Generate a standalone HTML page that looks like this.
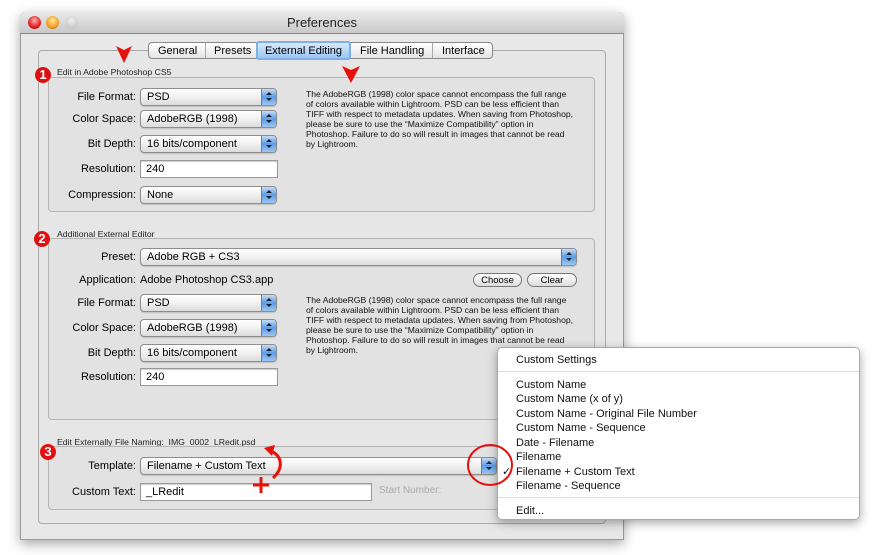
<!DOCTYPE html>
<html><head><meta charset="utf-8"><style>
*{margin:0;padding:0;box-sizing:border-box}
body{width:879px;height:555px;background:#fff;position:relative;overflow:hidden;font-family:"Liberation Sans",sans-serif;font-size:11px;color:#000}
.a{position:absolute}
.win{left:20px;top:12px;width:604px;height:528px;background:#e8e8e8;border:1px solid #999;border-radius:5px 5px 0 0;box-shadow:0 4px 12px rgba(0,0,0,.35)}
.title{left:20px;top:12px;width:604px;height:22px;background:linear-gradient(#e9e9e9,#c9c9c9);border-radius:5px 5px 0 0;border-bottom:1px solid #888;text-align:center;line-height:22px;font-size:13px;color:#222}
.dot{width:13px;height:13px;border-radius:50%;top:16px}
.box{border:1px solid #b5b5b5;border-radius:4px;background:#e2e2e2}
.lbl{width:88px;text-align:right;left:48px;line-height:14px;font-size:11px}
.pop{height:18px;border:1px solid #8d8d8d;border-radius:4px;background:linear-gradient(#fff,#f2f2f2 45%,#dcdcdc);line-height:16px;padding-left:6px;font-size:11px;box-shadow:0 1px 1px rgba(0,0,0,.15);overflow:hidden}
.pop i{position:absolute;right:0;top:0;bottom:0;width:15px;border-radius:0 3px 3px 0;background:linear-gradient(#c4dcf8,#5e9be4 50%,#9cc6f3);border-left:1px solid #5a7fb0}
.pop i::before{content:"";position:absolute;left:4px;top:3px;border:3px solid transparent;border-bottom:3px solid #123;border-top:0}
.pop i::after{content:"";position:absolute;left:4px;top:9px;border:3px solid transparent;border-top:3px solid #123;border-bottom:0}
.fld{height:18px;border:1px solid #999;background:#fff;line-height:16px;padding-left:5px;box-shadow:inset 0 1px 1px rgba(0,0,0,.2)}
.desc{font-size:8.6px;line-height:10px;color:#111;white-space:nowrap}
.cap{font-size:8.7px;color:#222}
.num{width:16px;height:16px;border-radius:50%;background:#e01010;color:#fff;font-weight:bold;font-size:13px;text-align:center;line-height:16px}
.btn{height:14px;border:1px solid #777;border-radius:8px;background:linear-gradient(#fff,#ddd);text-align:center;line-height:13px;font-size:9.5px}
.menu{left:497px;top:347px;width:363px;height:173px;background:rgba(255,255,255,.98);border:1px solid #aaa;border-radius:5px;box-shadow:0 3px 10px rgba(0,0,0,.35)}
.mi{left:18px;font-size:11px;line-height:14px;color:#111}
</style></head><body>
<div class="a win"></div>
<div class="a title">Preferences</div>
<div class="a dot" style="left:28px;background:radial-gradient(circle at 50% 35%,#ffb0b0,#e02020 60%,#a00)"></div>
<div class="a dot" style="left:46px;background:radial-gradient(circle at 50% 35%,#ffe6a0,#f0a020 60%,#b06000)"></div>
<div class="a dot" style="left:65px;background:radial-gradient(circle at 50% 35%,#eee,#bbb)"></div>

<div class="a" style="left:38px;top:50px;width:568px;height:474px;border:1px solid #aaa;border-radius:4px;background:#e6e6e6"></div>
<div class="a" style="left:148px;top:42px;width:345px;height:17px;border:1px solid #888;border-radius:4px;background:linear-gradient(#fff,#e4e4e4);font-size:11px;line-height:16px">
<span class="a" style="left:9px">General</span><span class="a" style="left:56px;top:0;width:1px;height:15px;background:#aaa"></span>
<span class="a" style="left:65px">Presets</span>
<span class="a" style="left:107px;top:-2px;width:95px;height:19px;border:2px solid #7fb0ea;border-radius:3px;background:linear-gradient(#d8e9fc,#9cc6f2);text-align:center;line-height:16px">External Editing</span>
<span class="a" style="left:211px">File Handling</span><span class="a" style="left:283px;top:0;width:1px;height:15px;background:#aaa"></span>
<span class="a" style="left:293px">Interface</span></div>

<!-- group 1 -->
<div class="a cap" style="left:57px;top:67px">Edit in Adobe Photoshop CS5</div>
<div class="a box" style="left:48px;top:77px;width:547px;height:135px"></div>
<div class="a num" style="left:35px;top:67px">1</div>
<div class="a lbl" style="top:90px">File Format:</div><div class="a pop" style="left:140px;top:88px;width:137px">PSD<i></i></div>
<div class="a lbl" style="top:112px">Color Space:</div><div class="a pop" style="left:140px;top:110px;width:137px">AdobeRGB (1998)<i></i></div>
<div class="a lbl" style="top:137px">Bit Depth:</div><div class="a pop" style="left:140px;top:135px;width:137px">16 bits/component<i></i></div>
<div class="a lbl" style="top:162px">Resolution:</div><div class="a fld" style="left:140px;top:160px;width:138px">240</div>
<div class="a lbl" style="top:188px">Compression:</div><div class="a pop" style="left:140px;top:186px;width:137px">None<i></i></div>
<div class="a desc" style="left:306px;top:89px">The AdobeRGB (1998) color space cannot encompass the full range<br>of colors available within Lightroom. PSD can be less efficient than<br>TIFF with respect to metadata updates. When saving from Photoshop,<br>please be sure to use the “Maximize Compatibility” option in<br>Photoshop. Failure to do so will result in images that cannot be read<br>by Lightroom.</div>

<!-- group 2 -->
<div class="a cap" style="left:57px;top:229px">Additional External Editor</div>
<div class="a box" style="left:48px;top:238px;width:547px;height:182px"></div>
<div class="a num" style="left:34px;top:231px">2</div>
<div class="a lbl" style="top:250px">Preset:</div><div class="a pop" style="left:140px;top:248px;width:437px">Adobe RGB + CS3<i></i></div>
<div class="a lbl" style="top:273px">Application:</div><div class="a" style="left:140px;top:273px;line-height:14px">Adobe Photoshop CS3.app</div>
<div class="a btn" style="left:473px;top:273px;width:49px">Choose</div>
<div class="a btn" style="left:527px;top:273px;width:50px">Clear</div>
<div class="a lbl" style="top:296px">File Format:</div><div class="a pop" style="left:140px;top:294px;width:137px">PSD<i></i></div>
<div class="a lbl" style="top:321px">Color Space:</div><div class="a pop" style="left:140px;top:319px;width:137px">AdobeRGB (1998)<i></i></div>
<div class="a lbl" style="top:346px">Bit Depth:</div><div class="a pop" style="left:140px;top:344px;width:137px">16 bits/component<i></i></div>
<div class="a lbl" style="top:370px">Resolution:</div><div class="a fld" style="left:140px;top:368px;width:138px">240</div>
<div class="a desc" style="left:306px;top:295px">The AdobeRGB (1998) color space cannot encompass the full range<br>of colors available within Lightroom. PSD can be less efficient than<br>TIFF with respect to metadata updates. When saving from Photoshop,<br>please be sure to use the “Maximize Compatibility” option in<br>Photoshop. Failure to do so will result in images that cannot be read<br>by Lightroom.</div>

<!-- group 3 -->
<div class="a cap" style="left:57px;top:437px">Edit Externally File Naming:&nbsp; IMG_0002_LRedit.psd</div>
<div class="a box" style="left:48px;top:446px;width:547px;height:64px"></div>
<div class="a num" style="left:40px;top:444px">3</div>
<div class="a lbl" style="top:459px">Template:</div><div class="a pop" style="left:140px;top:457px;width:357px">Filename + Custom Text<i></i></div>
<div class="a lbl" style="top:485px">Custom Text:</div><div class="a fld" style="left:140px;top:483px;width:232px">_LRedit</div>
<div class="a" style="left:379px;top:485px;color:#aaa;font-size:10px">Start Number:</div>

<!-- menu -->
<div class="a menu">
<div class="a mi" style="top:5px">Custom Settings</div>
<div class="a" style="left:0;top:23px;width:361px;height:1px;background:#ddd"></div>
<div class="a mi" style="top:30px">Custom Name</div>
<div class="a mi" style="top:44px">Custom Name (x of y)</div>
<div class="a mi" style="top:59px">Custom Name - Original File Number</div>
<div class="a mi" style="top:73px">Custom Name - Sequence</div>
<div class="a mi" style="top:88px">Date - Filename</div>
<div class="a mi" style="top:102px">Filename</div>
<div class="a mi" style="top:117px">Filename + Custom Text</div>
<div class="a mi" style="left:4px;top:117px">✓</div>
<div class="a mi" style="top:131px">Filename - Sequence</div>
<div class="a" style="left:0;top:149px;width:361px;height:1px;background:#ddd"></div>
<div class="a mi" style="top:156px">Edit...</div>
</div>

<!-- annotations -->
<svg class="a" style="left:0;top:0" width="879" height="555">
<path d="M116,46 L124,50 L132,46 L124,63 Z" fill="#e8100a"/>
<path d="M342,66 L351,70 L360,66 L351,83 Z" fill="#e8100a"/>
<ellipse cx="490" cy="465" rx="22" ry="20" fill="none" stroke="#e8100a" stroke-width="2"/>
<path d="M273,478 C284,468 282,456 271,451" fill="none" stroke="#e8100a" stroke-width="3"/>
<path d="M264,448 L275,445 L272,456 Z" fill="#e8100a"/>
<path d="M261,477 V493 M253,485 H269" stroke="#e8100a" stroke-width="3"/>
</svg>
</body></html>
